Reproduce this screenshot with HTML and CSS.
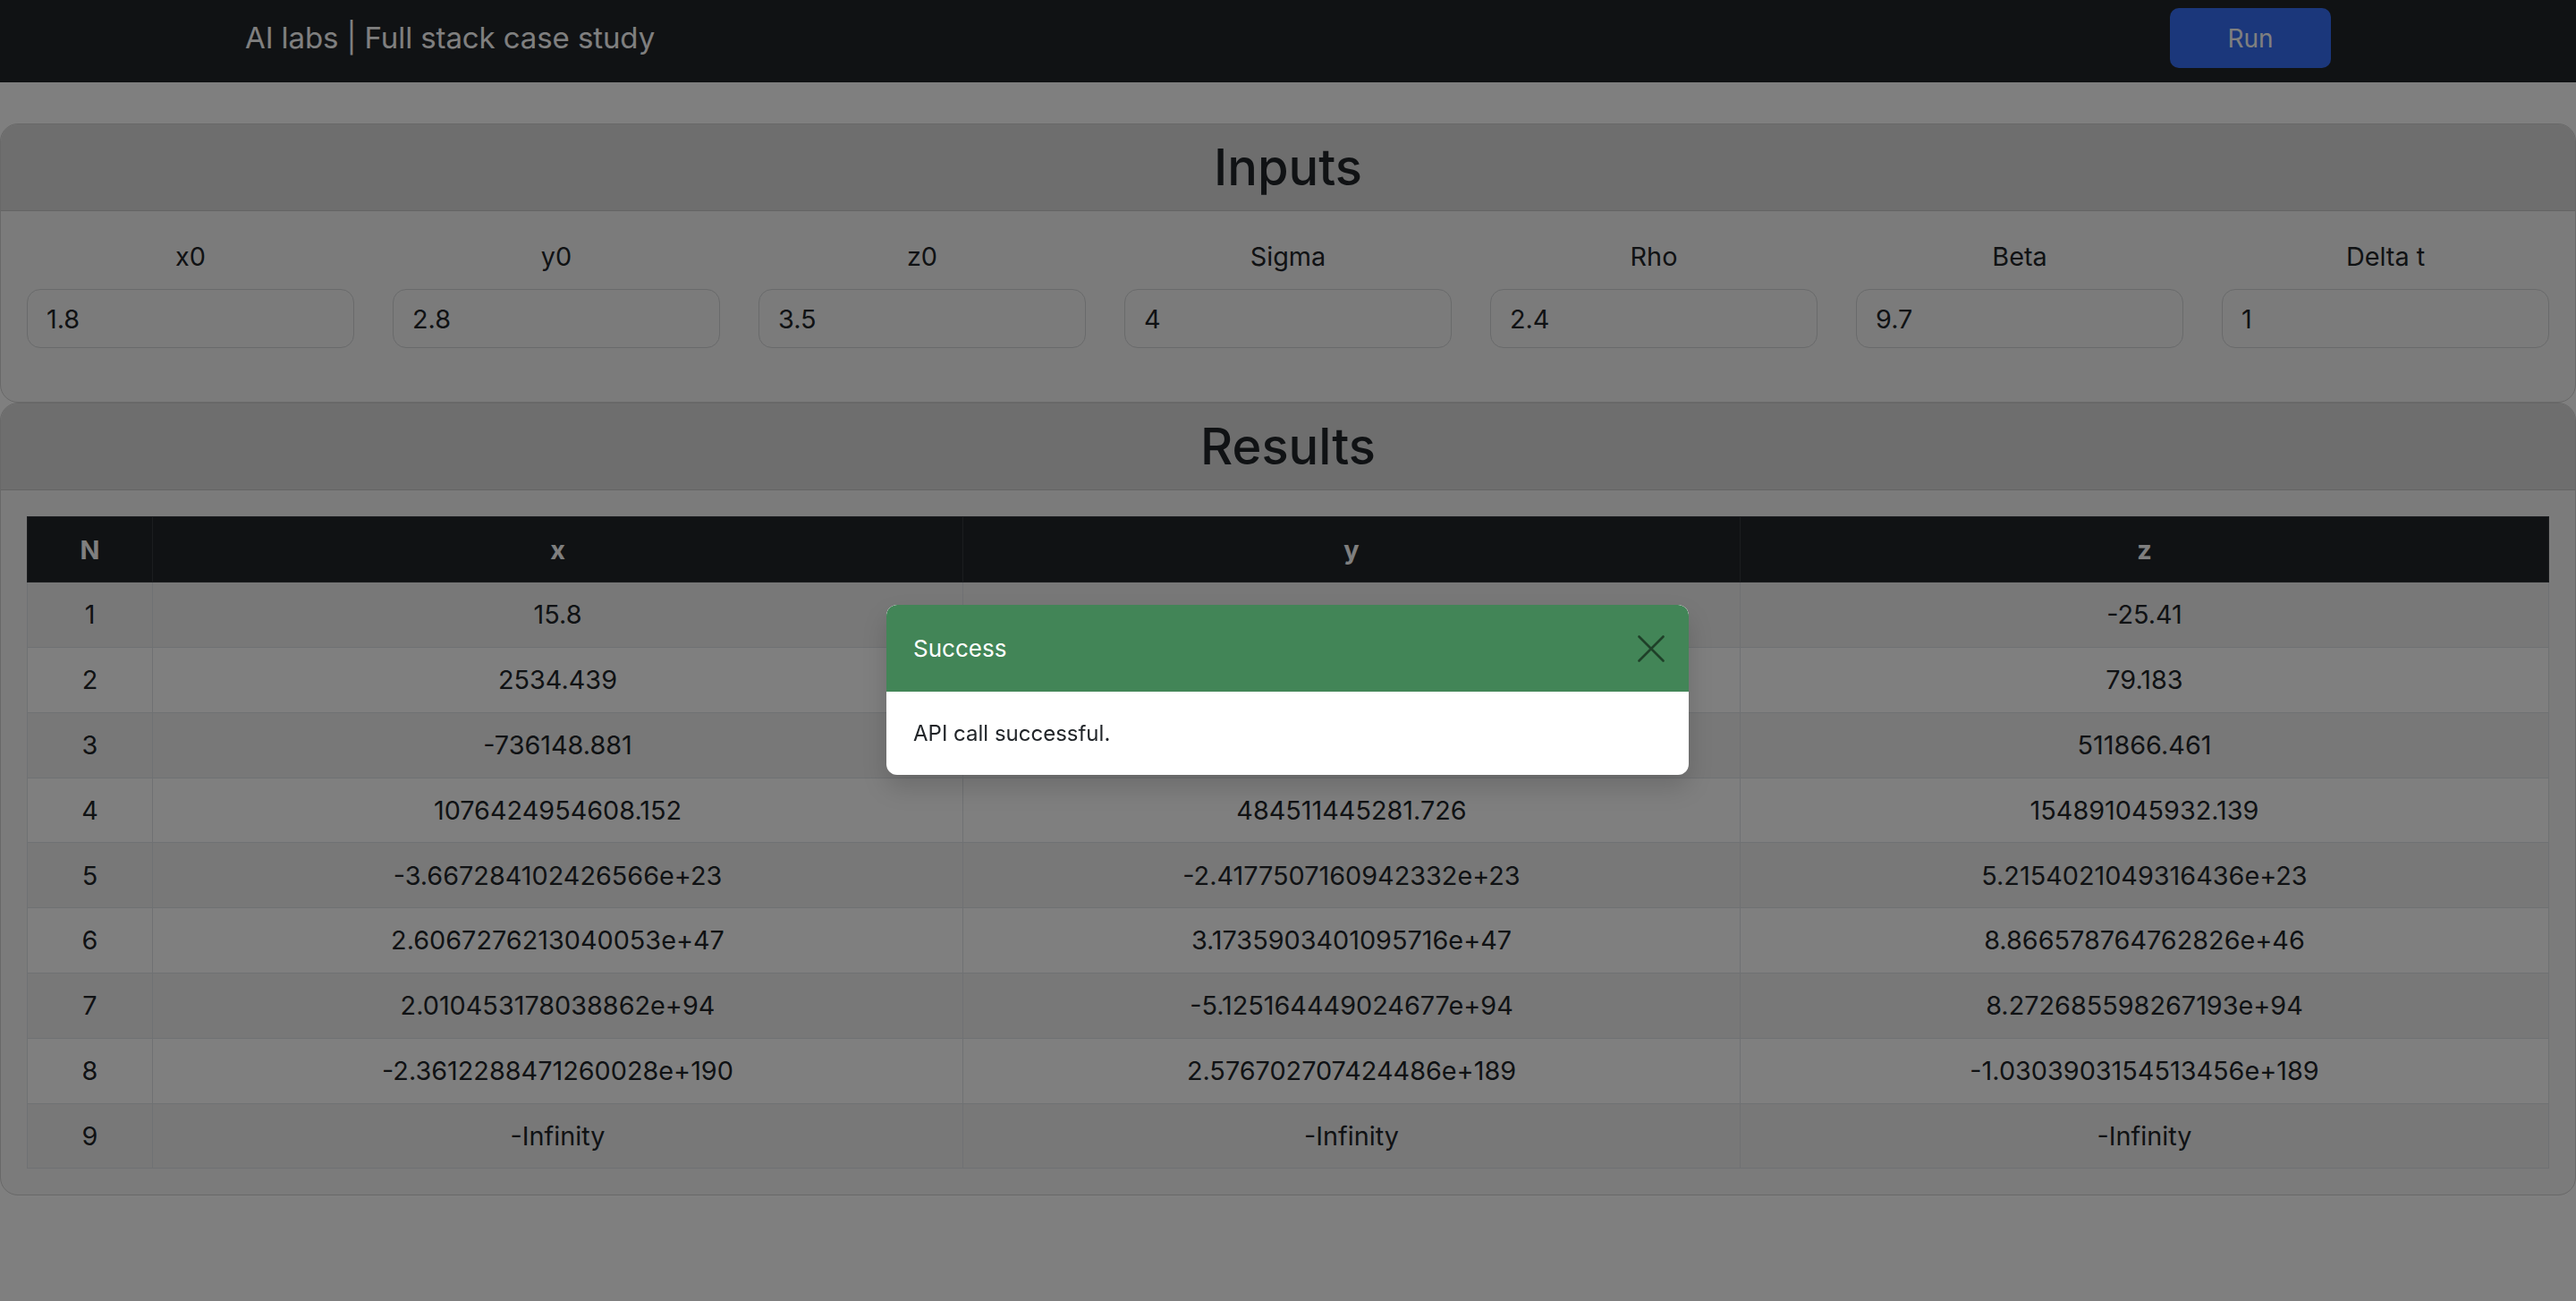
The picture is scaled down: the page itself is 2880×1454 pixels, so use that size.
FILE: index.html
```html
<!DOCTYPE html>
<html lang="en">
<head>
<meta charset="utf-8">
<title>AI labs | Full stack case study</title>
<link rel="stylesheet" href="styles.css">
</head>
<body>
<nav class="navbar">
  <div class="nav-inner">
    <span class="brand">AI labs | Full stack case study</span>
    <button class="btn-run" type="button">Run</button>
  </div>
</nav>
<main class="page">
  <section class="card">
    <div class="card-header"><h2 class="card-title">Inputs</h2></div>
    <div class="card-body inputs-body">
      <div class="inputs-grid">
        <div class="field"><label class="field-label">x0</label><input class="field-input" value="1.8"></div>
        <div class="field"><label class="field-label">y0</label><input class="field-input" value="2.8"></div>
        <div class="field"><label class="field-label">z0</label><input class="field-input" value="3.5"></div>
        <div class="field"><label class="field-label">Sigma</label><input class="field-input" value="4"></div>
        <div class="field"><label class="field-label">Rho</label><input class="field-input" value="2.4"></div>
        <div class="field"><label class="field-label">Beta</label><input class="field-input" value="9.7"></div>
        <div class="field"><label class="field-label">Delta t</label><input class="field-input" value="1"></div>
      </div>
    </div>
  </section>
  <section class="card">
    <div class="card-header"><h2 class="card-title">Results</h2></div>
    <div class="card-body">
      <table class="results">
        <colgroup>
          <col class="col-n"><col class="col-x"><col class="col-y"><col class="col-z">
        </colgroup>
        <thead>
          <tr><th>N</th><th>x</th><th>y</th><th>z</th></tr>
        </thead>
        <tbody>
          <tr><td>1</td><td>15.8</td><td></td><td>-25.41</td></tr>
          <tr><td>2</td><td>2534.439</td><td></td><td>79.183</td></tr>
          <tr><td>3</td><td>-736148.881</td><td></td><td>511866.461</td></tr>
          <tr><td>4</td><td>1076424954608.152</td><td>484511445281.726</td><td>154891045932.139</td></tr>
          <tr><td>5</td><td>-3.667284102426566e+23</td><td>-2.4177507160942332e+23</td><td>5.2154021049316436e+23</td></tr>
          <tr><td>6</td><td>2.6067276213040053e+47</td><td>3.1735903401095716e+47</td><td>8.866578764762826e+46</td></tr>
          <tr><td>7</td><td>2.010453178038862e+94</td><td>-5.125164449024677e+94</td><td>8.272685598267193e+94</td></tr>
          <tr><td>8</td><td>-2.3612288471260028e+190</td><td>2.576702707424486e+189</td><td>-1.0303903154513456e+189</td></tr>
          <tr><td>9</td><td>-Infinity</td><td>-Infinity</td><td>-Infinity</td></tr>
        </tbody>
      </table>
    </div>
  </section>
</main>
<div class="backdrop"></div>
<div class="toast" role="alert">
  <div class="toast-header">
    <strong class="toast-title">Success</strong>
    <button class="toast-close" type="button" aria-label="Close">
      <svg width="30" height="30" viewBox="0 0 30 30"><path d="M1.5 1.5 L28.5 28.5 M28.5 1.5 L1.5 28.5" stroke="currentColor" stroke-width="2.6" fill="none" stroke-linecap="round"/></svg>
    </button>
  </div>
  <div class="toast-body">API call successful.</div>
</div>
</body>
</html>
```
FILE: styles.css
```css
* { box-sizing: border-box; }
html, body { margin: 0; padding: 0; }
body {
  font-family: "Inter", "Liberation Sans", sans-serif;
  font-size: 28.8px;
  line-height: 1.5;
  color: #212529;
  background: #ffffff;
  min-height: 1454px;
}
.navbar {
  background: #212529;
  height: 92px;
  padding-top: 9px;
}
.nav-inner {
  width: 2332px;
  margin: 0 auto;
  display: flex;
  align-items: center;
  justify-content: space-between;
}
.brand {
  color: #ffffff;
  font-size: 33px;
  line-height: 1;
  letter-spacing: -0.1px;
}
.btn-run {
  width: 180px;
  height: 67px;
  border: 0;
  border-radius: 10px;
  background: #366ef6;
  color: #ffffff;
  font-family: inherit;
  font-size: 28px;
}
.page { padding-top: 46px; }
.card {
  background: #f6f6f6;
  border: 1.8px solid #d0d0d0;
  border-radius: 20px;
  overflow: hidden;
}
.card-header {
  background: #dcdcdc;
  border-bottom: 1.8px solid #c8c8c8;
  padding: 15px 29px 14px;
  text-align: center;
}
.card-title {
  margin: 0;
  font-size: 56px;
  font-weight: 500;
  line-height: 1.2;
}
.card-body { padding: 29px; }
.inputs-body { padding-bottom: 60px; }
.inputs-grid {
  display: grid;
  grid-template-columns: repeat(7, minmax(0, 1fr));
  column-gap: 43px;
}
.field { display: flex; flex-direction: column; min-width: 0; }
.field-label {
  text-align: center;
  line-height: 43px;
  margin-bottom: 15px;
}
.field-input {
  width: 100%;
  min-width: 0;
  height: 66px;
  border: 1.8px solid #d2d4d6;
  border-radius: 15px;
  background: #f6f6f6;
  font-family: inherit;
  font-size: 28.8px;
  color: #212529;
  padding: 0 21px;
}
.results {
  width: 100%;
  border-collapse: collapse;
  table-layout: fixed;
  background: #ffffff;
}
.col-n { width: 140px; }
.col-x { width: 906px; }
.col-y { width: 869px; }
.col-z { width: 904px; }
.results th, .results td {
  text-align: center;
  padding: 14px 10px;
  height: 72.8px;
  line-height: 43.2px;
  border: 1.5px solid #dee2e6;
}
.results thead th {
  background: #212529;
  color: #ffffff;
  font-weight: 700;
  border-color: #373b3e;
}
.results tbody tr:nth-child(odd) td { background: #f0f0f0; }
.backdrop {
  position: fixed;
  inset: 0;
  background: rgba(0, 0, 0, 0.5);
}
.toast {
  position: absolute;
  top: 676px;
  left: 991px;
  width: 897px;
  background: #ffffff;
  border-radius: 12px;
  box-shadow: 0 14px 28px rgba(0, 0, 0, 0.15);
  overflow: hidden;
}
.toast-header {
  height: 97px;
  background: #428557;
  display: flex;
  align-items: center;
  justify-content: space-between;
  padding: 0 27px 0 30px;
  border-radius: 12px 12px 0 0;
}
.toast-title {
  color: #ffffff;
  font-weight: 400;
  font-size: 26px;
}
.toast-close {
  border: 0;
  background: none;
  padding: 0;
  width: 30px;
  height: 30px;
  color: #1f4029;
  display: flex;
}
.toast-body {
  height: 93px;
  display: flex;
  align-items: center;
  padding: 0 30px;
  font-size: 24px;
  color: #212529;
}
```
